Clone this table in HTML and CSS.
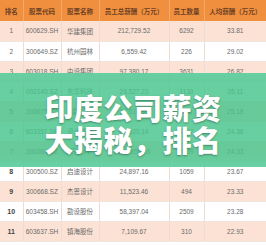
FILE: index.html
```html
<!DOCTYPE html>
<html lang="zh">
<head>
  <meta charset="UTF-8">
  <meta name="viewport" content="width=device-width, initial-scale=1.0">
  <title>印度公司薪资大揭秘</title>
  <link rel="stylesheet" href="styles.css">
</head>
<body>
  <article class="card">
    <table class="rank-table">
      <thead>
        <tr>
          <th>排名</th><th>股票代码</th><th>股票名称</th><th>员工总薪酬（万元）</th><th>员工数量</th><th>人均薪酬（万元）</th>
        </tr>
      </thead>
      <tbody>
        <tr><td>1</td><td>600629.SH</td><td>华建集团</td><td>212,729.52</td><td>6292</td><td>33.81</td></tr>
        <tr><td>2</td><td>300649.SZ</td><td>杭州园林</td><td>6,559.42</td><td>226</td><td>29.02</td></tr>
        <tr><td>3</td><td>603018.SH</td><td>中设集团</td><td>97,380.17</td><td>3631</td><td>26.82</td></tr>
        <tr><td>4</td><td>002140.SZ</td><td>东华科技</td><td>29,527.23</td><td>1130</td><td>26.11</td></tr>
        <tr><td>5</td><td>300675.SZ</td><td>建科院</td><td>17,610.35</td><td>699</td><td>25.18</td></tr>
        <tr><td>6</td><td>603357.SH</td><td>设计总院</td><td>44,020.14</td><td>1807</td><td>24.36</td></tr>
        <tr><td>7</td><td>300284.SZ</td><td>苏交科</td><td>185,856.16</td><td>7639</td><td>24.33</td></tr>
        <tr class="strong"><td>8</td><td>300500.SZ</td><td>启迪设计</td><td>24,897.16</td><td>1059</td><td>23.67</td></tr>
        <tr class="strong"><td>9</td><td>300668.SZ</td><td>杰恩设计</td><td>11,523.46</td><td>494</td><td>23.33</td></tr>
        <tr class="strong"><td>10</td><td>603458.SH</td><td>勘设股份</td><td>58,397.04</td><td>2509</td><td>23.28</td></tr>
        <tr class="strong"><td>11</td><td>603637.SH</td><td>镇海股份</td><td>7,109.67</td><td>310</td><td>22.93</td></tr>
      </tbody>
    </table>
    <!-- 표 위에 겹치는 제목 띠 -->
    <div class="banner">
      <h1>印度公司薪资<br>大揭秘，排名</h1>
    </div>
  </article>
</body>
</html>
```

FILE: styles.css
```css
* {margin:0; padding:0; box-sizing:border-box;}
body{
  background:#fff;
  font-family:"Liberation Sans","Noto Sans CJK SC",sans-serif;
}
.card{
  width:266px;
  position:relative;
}
.rank-table{
  width:100%;
  border-collapse:collapse;
  table-layout:fixed;
  font-size:6.5px;
  color:#6a6a6a;
}
.rank-table th:nth-child(1){width:23px;}
.rank-table th:nth-child(2){width:38px;}
.rank-table th:nth-child(3){width:38px;}
.rank-table th:nth-child(4){width:70px;}
.rank-table th:nth-child(5){width:35px;}
.rank-table th{
  height:21px;
  background:#f0903f;
  color:#6e4024;
  font-weight:bold;
  border-right:1px solid #f4a86a;
  white-space:nowrap;
}
.rank-table td{
  height:20px;
  text-align:center;
  border-right:1px solid #ecdcd3;
  border-bottom:1px solid #f1e4dc;
  white-space:nowrap;
}
.rank-table th:last-child, .rank-table td:last-child{border-right:none;}
.rank-table tbody tr:nth-child(odd){background:#fce2d4;}
.rank-table tbody tr:nth-child(even){background:#fff;}
.rank-table tr.strong td:first-child{font-weight:bold; color:#444; font-size:7px;}

.banner{
  position:absolute;
  left:0; top:73px;
  width:100%; height:94px;
  background:linear-gradient(rgba(96,206,160,0.95), rgba(70,196,140,0.82) 15%, rgba(70,196,140,0.82) 85%, rgba(96,206,160,0.95));
  display:flex;
  align-items:center;
  justify-content:center;
  padding-top:6px;
}
.banner h1{
  font-family:"Noto Sans CJK SC",sans-serif;
  font-weight:900;
  font-size:29px;
  letter-spacing:0.5px;
  line-height:32px;
  color:#fff;
  text-align:center;
  text-shadow:0 1px 2px rgba(0,0,0,0.35);
}
```
